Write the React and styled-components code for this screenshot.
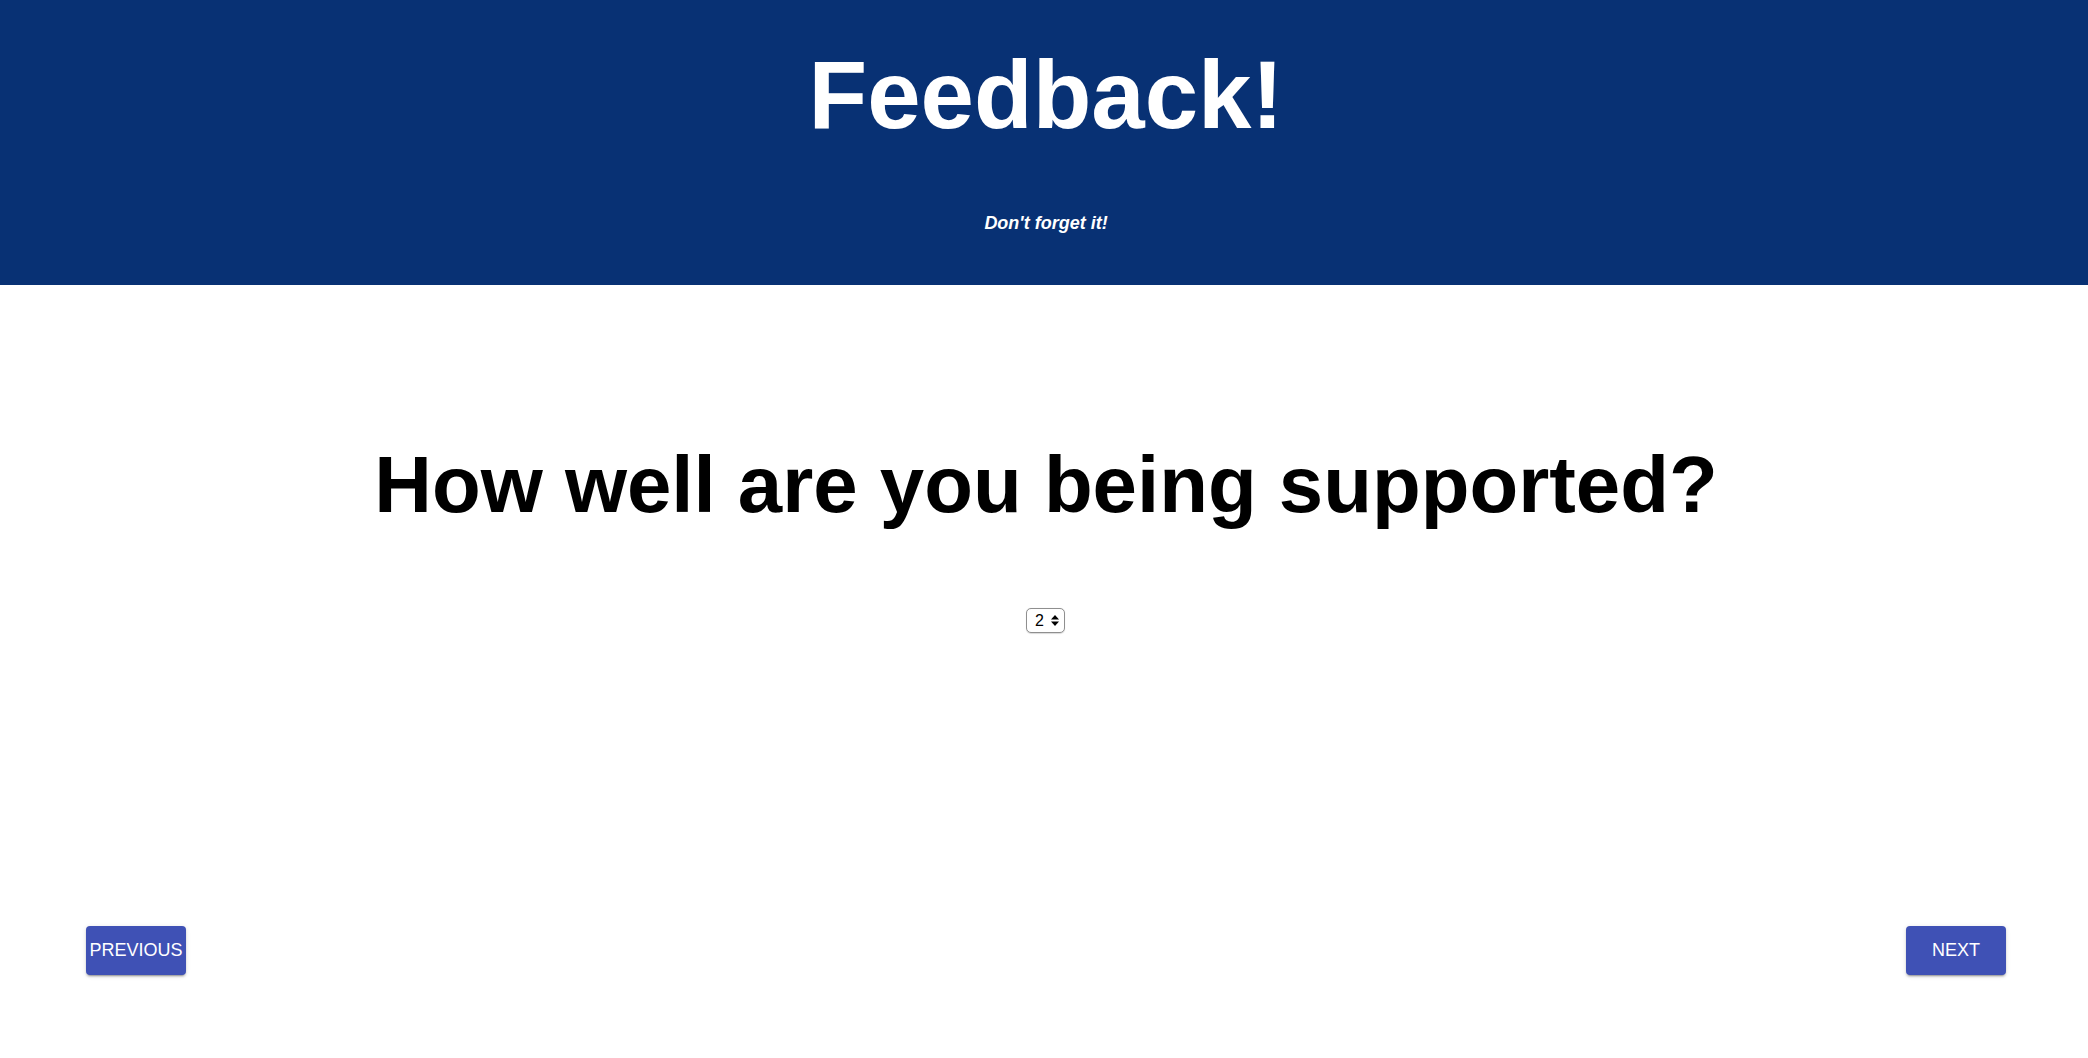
import React from "react";
import styled, { createGlobalStyle } from "styled-components";

const Global = createGlobalStyle`
  html, body { margin: 0; padding: 0; background: #ffffff; }
  body { font-family: "Liberation Sans", Arial, Helvetica, sans-serif; color: #000; }
  * { box-sizing: border-box; }
`;

const Page = styled.div`
  width: 100%;
  min-height: 1058px;
  display: flex;
  flex-direction: column;
`;

const Header = styled.header`
  height: 285px;
  background: #083174;
  color: #ffffff;
  padding-top: 40px;
  display: flex;
  flex-direction: column;
  align-items: center;
`;

const Title = styled.h1`
  margin: 0 0 0 4px;
  font-size: 96px;
  line-height: 110px;
  font-weight: 700;
`;

const Subtitle = styled.p`
  margin: 63px 0 0 4px;
  font-size: 18px;
  line-height: 20px;
  font-weight: 700;
  font-style: italic;
`;

const Main = styled.main`
  padding-top: 154px;
  display: flex;
  flex-direction: column;
  align-items: center;
`;

const Question = styled.h2`
  margin: 0 0 0 4px;
  font-size: 79.8px;
  line-height: 92px;
  font-weight: 700;
  text-align: center;
`;

const SelectWrap = styled.div`
  position: relative;
  margin: 77px 0 0 3px;
  height: 25px;
`;

const Select = styled.select`
  appearance: none;
  -webkit-appearance: none;
  height: 25px;
  width: 39px;
  padding: 0 0 0 8px;
  font-family: "Liberation Sans", Arial, sans-serif;
  font-size: 16px;
  color: #000;
  background: #ffffff;
  border: 1px solid #8f8f8f;
  border-radius: 5px;
  box-shadow: 0 0.5px 1px rgba(0, 0, 0, 0.15);
  outline: none;
`;

const Arrows = styled.svg`
  position: absolute;
  right: 6px;
  top: 7px;
  pointer-events: none;
`;

const Footer = styled.footer`
  margin-top: 293px;
  display: flex;
  justify-content: space-between;
  padding: 0 82px 0 86px;
`;

const NavButton = styled.button`
  width: 100px;
  height: 49px;
  padding: 0;
  border: none;
  border-radius: 4px;
  background: #3f51b5;
  color: #ffffff;
  font-family: "Liberation Sans", Arial, sans-serif;
  font-size: 18px;
  font-weight: 400;
  letter-spacing: 0;
  text-transform: uppercase;
  box-shadow: 0 3px 1px -2px rgba(0, 0, 0, 0.2), 0 2px 2px 0 rgba(0, 0, 0, 0.14),
    0 1px 5px 0 rgba(0, 0, 0, 0.12);
  cursor: pointer;
`;

export default function App() {
  return (
    <Page>
      <Global />
      <Header>
        <Title>Feedback!</Title>
        <Subtitle>Don't forget it!</Subtitle>
      </Header>
      <Main>
        <Question>How well are you being supported?</Question>
        <SelectWrap>
          <Select defaultValue="2">
            <option value="1">1</option>
            <option value="2">2</option>
            <option value="3">3</option>
            <option value="4">4</option>
            <option value="5">5</option>
          </Select>
          <Arrows width="8" height="11" viewBox="0 0 8 11">
            <path d="M4 0 L8 4.5 L0 4.5 Z" fill="#000" />
            <path d="M0 6.5 L8 6.5 L4 11 Z" fill="#000" />
          </Arrows>
        </SelectWrap>
      </Main>
      <Footer>
        <NavButton>Previous</NavButton>
        <NavButton>Next</NavButton>
      </Footer>
    </Page>
  );
}
